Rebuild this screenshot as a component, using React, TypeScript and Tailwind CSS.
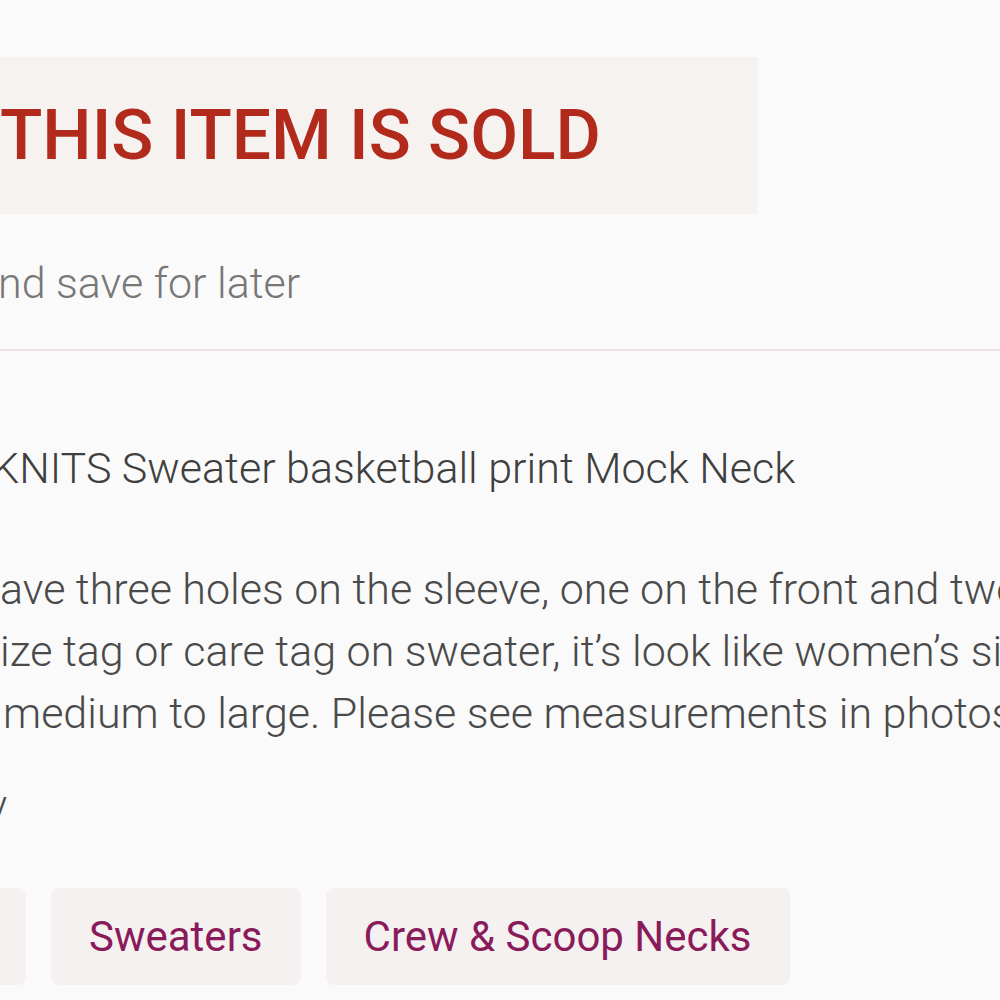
import React from "react";

const tags = ["Sweaters", "Crew & Scoop Necks"];

const App: React.FC = () => {
  return (
    <div className="w-[1000px] h-[1000px] overflow-hidden bg-[#fafafa] font-['Roboto','Liberation_Sans',sans-serif] flex flex-col">
      {/* Sold banner */}
      <div className="mt-[57px] -ml-[40px] pl-[40px] w-[798px] h-[157px] shrink-0 flex items-center bg-[#f6f2f0]">
        <span className="text-[69.5px] leading-none font-medium text-[#b22a1b] whitespace-nowrap">
          THIS ITEM IS SOLD
        </span>
      </div>

      {/* Save for later */}
      <div className="mt-[48px] -ml-[2px] text-[43px] leading-none font-light text-[#777777] whitespace-nowrap">
        nd save for later
      </div>

      <div className="mt-[44px] h-[2px] shrink-0 bg-[#ede2e4]" />

      {/* Title */}
      <div className="mt-[96px] -ml-[8px] text-[43px] leading-none font-light text-[#3f3f3f] whitespace-nowrap">
        KNITS Sweater basketball print Mock Neck
      </div>

      {/* Description */}
      <div className="mt-[68px] text-[43px] leading-[62px] font-light text-[#4a4a4a] whitespace-nowrap">
        <div>ave three holes on the sleeve, one on the front and two on the back.</div>
        <div>ize tag or care tag on sweater, it’s look like women’s size</div>
        <div className="ml-[3px]">medium to large. Please see measurements in photos.</div>
      </div>

      <div className="mt-[42px] -ml-[12px] text-[40px] leading-none font-light text-[#4a4a4a]">y</div>

      {/* Category tags */}
      <div className="mt-[62px] flex gap-[25px] -ml-[132px]">
        <div className="w-[158px] h-[97px] shrink-0 rounded-[8px] bg-[#f5f1f0]" />
        {tags.map((t) => (
          <div
            key={t}
            className="h-[97px] px-[38px] shrink-0 flex items-center rounded-[8px] bg-[#f5f1f0] text-[42px] text-[#8a1b5b] whitespace-nowrap"
          >
            {t}
          </div>
        ))}
      </div>
    </div>
  );
};

export default App;
